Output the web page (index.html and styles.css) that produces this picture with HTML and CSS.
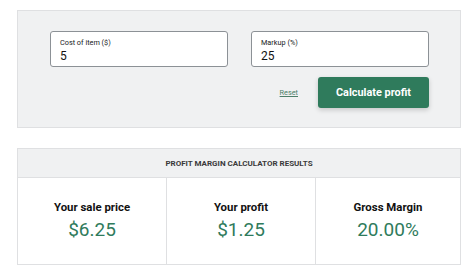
FILE: index.html
```html
<!DOCTYPE html>
<html>
<head>
<meta charset="utf-8">
<link rel="stylesheet" href="styles.css">
</head>
<body>
<div class="calc">
  <div class="inputs">
    <div class="field">
      <div class="label">Cost of item ($)</div>
      <div class="value">5</div>
    </div>
    <div class="field">
      <div class="label">Markup (%)</div>
      <div class="value">25</div>
    </div>
  </div>
  <div class="actions">
    <a class="reset">Reset</a>
    <button class="btn">Calculate profit</button>
  </div>
</div>
<div class="results">
  <div class="results-head">PROFIT MARGIN CALCULATOR RESULTS</div>
  <div class="cols">
    <div class="col">
      <div class="col-title">Your sale price</div>
      <div class="col-value">$6.25</div>
    </div>
    <div class="col">
      <div class="col-title">Your profit</div>
      <div class="col-value">$1.25</div>
    </div>
    <div class="col">
      <div class="col-title">Gross Margin</div>
      <div class="col-value">20.00%</div>
    </div>
  </div>
</div>
</body>
</html>
```

FILE: styles.css
```css
* { box-sizing: border-box; }
html, body { margin: 0; padding: 0; background: #fff; }
body {
  font-family: Roboto, "Noto Sans", sans-serif;
  color: #1a1a1a;
  width: 474px;
  height: 280px;
  overflow: hidden;
  padding-top: 10px;
  padding-left: 17px;
}
.calc {
  width: 444px;
  height: 118px;
  background: #f0f1f2;
  border: 1px solid #dfe0e2;
  padding: 20px 31px 0 32px;
}
.inputs {
  display: flex;
  gap: 23px;
}
.field {
  width: 178px;
  height: 36px;
  background: #fff;
  border: 1px solid #8c9196;
  border-radius: 3px;
  padding: 6px 9px 0;
}
.label {
  font-size: 7.3px;
  line-height: 9px;
  color: #202223;
}
.value {
  font-size: 12px;
  line-height: 15px;
  margin-top: 2px;
  color: #111;
}
.actions {
  display: flex;
  justify-content: flex-end;
  align-items: center;
  gap: 20px;
  margin-top: 10px;
}
.reset {
  font-size: 7.3px;
  color: #4d7f6a;
  text-decoration: underline;
}
.btn {
  width: 111px;
  height: 31px;
  border: none;
  border-radius: 3px;
  background: #2f7b5c;
  color: #fff;
  font-family: Roboto, "Noto Sans", sans-serif;
  font-weight: 700;
  font-size: 10.9px;
  box-shadow: 0 2px 5px rgba(0,0,0,0.18);
  padding: 0;
}
.results {
  width: 444px;
  margin-top: 20px;
  border: 1px solid #dfe0e2;
  background: #fff;
}
.results-head {
  height: 29px;
  background: #f0f1f2;
  border-bottom: 1px solid #dfe0e2;
  display: flex;
  align-items: center;
  justify-content: center;
  font-size: 8px;
  font-weight: 700;
  color: #3a3a3a;
}
.cols {
  display: grid;
  grid-template-columns: 148px 149px 1fr;
  height: 86px;
}
.col {
  display: flex;
  flex-direction: column;
  align-items: center;
  padding-top: 22px;
}
.col + .col { border-left: 1px solid #dfe0e2; }
.col-title {
  font-size: 11.4px;
  font-weight: 700;
  line-height: 14px;
  color: #111;
}
.col-value {
  font-size: 19px;
  line-height: 23px;
  color: #2f7b5c;
  margin-top: 4px;
}
```
